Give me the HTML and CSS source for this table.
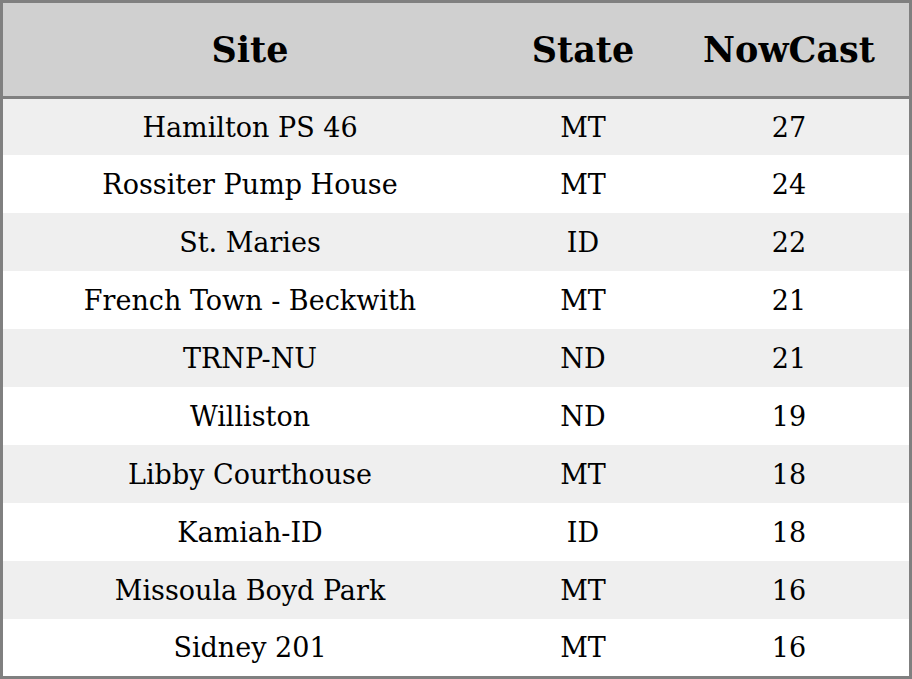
FILE: index.html
```html
<!DOCTYPE html>
<html>
<head>
<meta charset="utf-8">
<link rel="stylesheet" href="styles.css">
</head>
<body>
<table class="data">
  <colgroup>
    <col class="c-site">
    <col class="c-state">
    <col class="c-now">
  </colgroup>
  <thead>
    <tr><th>Site</th><th>State</th><th>NowCast</th></tr>
  </thead>
  <tbody>
    <tr><td>Hamilton PS 46</td><td>MT</td><td>27</td></tr>
    <tr><td>Rossiter Pump House</td><td>MT</td><td>24</td></tr>
    <tr><td>St. Maries</td><td>ID</td><td>22</td></tr>
    <tr><td>French Town - Beckwith</td><td>MT</td><td>21</td></tr>
    <tr><td>TRNP-NU</td><td>ND</td><td>21</td></tr>
    <tr><td>Williston</td><td>ND</td><td>19</td></tr>
    <tr><td>Libby Courthouse</td><td>MT</td><td>18</td></tr>
    <tr><td>Kamiah-ID</td><td>ID</td><td>18</td></tr>
    <tr><td>Missoula Boyd Park</td><td>MT</td><td>16</td></tr>
    <tr><td>Sidney 201</td><td>MT</td><td>16</td></tr>
  </tbody>
</table>
</body>
</html>
```
FILE: styles.css
```css
html, body {
  margin: 0;
  padding: 0;
  background: #ffffff;
}
.data {
  width: 912px;
  border-collapse: separate;
  border-spacing: 0;
  border: 3px solid #808080;
  table-layout: fixed;
  font-family: "DejaVu Serif", serif;
  color: #000;
}
.c-site { width: 494px; }
.c-state { width: 172px; }
.c-now { width: 240px; }
.data th {
  height: 93px;
  padding: 0;
  background: #d0d0d0;
  border-bottom: 3px solid #808080;
  font-size: 35px;
  line-height: 1;
  font-weight: bold;
  text-align: center;
  vertical-align: middle;
}
.data td {
  height: 58px;
  padding: 0;
  font-size: 27px;
  line-height: 1;
  text-align: center;
  vertical-align: middle;
}
.data tbody tr:first-child td {
  height: 56px;
}
.data tbody tr:last-child td {
  height: 57px;
}
.data tbody tr:nth-child(odd) td {
  background: #efefef;
}
```
